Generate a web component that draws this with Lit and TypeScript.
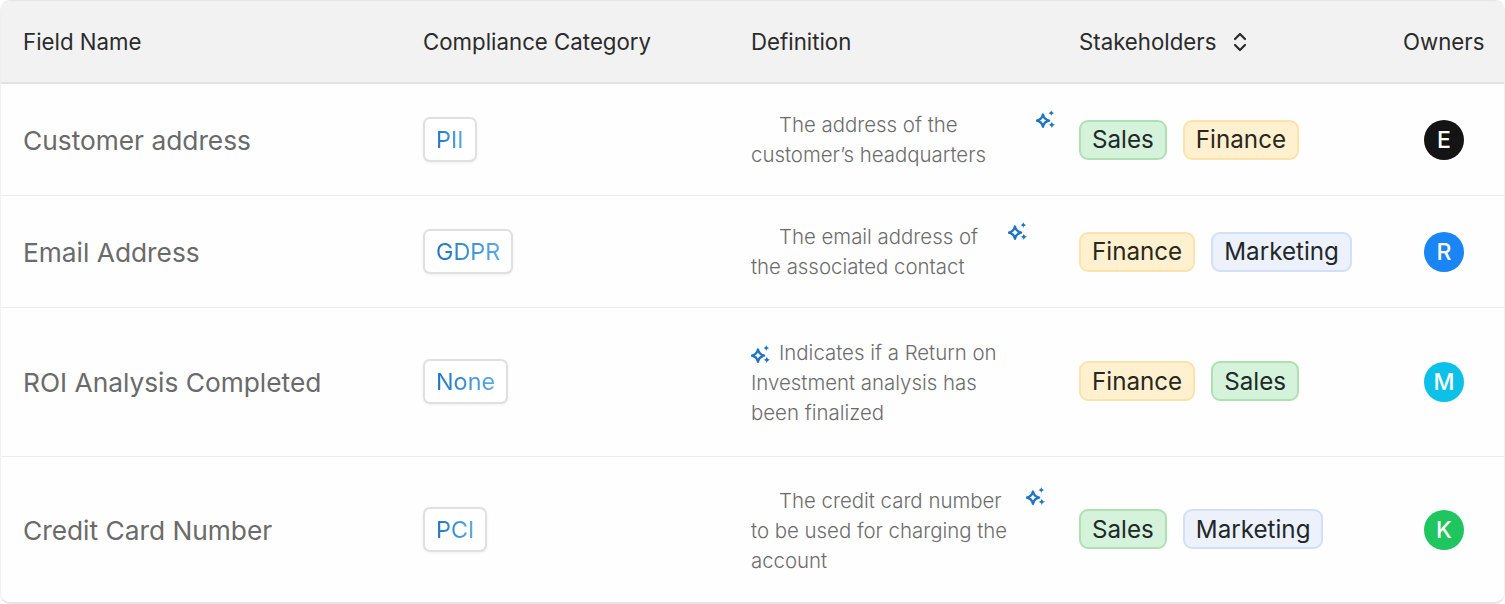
import { LitElement, html, css, svg } from "lit";
import { customElement } from "lit/decorators.js";

const rows = [
  { name: "Customer address", cat: "PII", lines: ["The address of the", "customer’s headquarters"], spark: 285, tags: ["Sales", "Finance"], init: "E", color: "#141414" },
  { name: "Email Address", cat: "GDPR", lines: ["The email address of", "the associated contact"], spark: 257, tags: ["Finance", "Marketing"], init: "R", color: "#1a85f5" },
  { name: "ROI Analysis Completed", cat: "None", lines: ["Indicates if a Return on", "Investment analysis has", "been finalized"], spark: 0, tags: ["Finance", "Sales"], init: "M", color: "#0cc0e8" },
  { name: "Credit Card Number", cat: "PCI", lines: ["The credit card number", "to be used for charging the", "account"], spark: 275, tags: ["Sales", "Marketing"], init: "K", color: "#1fc55e" },
];

const sparkle = svg`<path d="M8 5.2 C8.6 8 10 9.4 12.8 10 C10 10.6 8.6 12 8 14.8 C7.4 12 6 10.6 3.2 10 C6 9.4 7.4 8 8 5.2 Z" fill="none" stroke="#1f74c4" stroke-width="1.9" stroke-linejoin="round"/>
<path d="M14.6 1.6 C14.9 3 15.6 3.7 17 4 C15.6 4.3 14.9 5 14.6 6.4 C14.3 5 13.6 4.3 12.2 4 C13.6 3.7 14.3 3 14.6 1.6 Z" fill="#1f74c4"/>
<path d="M15 10.6 C15.3 12.2 16 12.9 17.8 13.3 C16 13.7 15.3 14.4 15 16 C14.7 14.4 14 13.7 12.2 13.3 C14 12.9 14.7 12.2 15 10.6 Z" fill="#1f74c4"/>`;

@customElement("app-root")
export class AppRoot extends LitElement {
  static styles = css`
    :host { display: block; font-family: Inter, "Liberation Sans", sans-serif; font-optical-sizing: none; background: #fff; }
    .card { width: 1505px; height: 604px; box-sizing: border-box; border: 1px solid #e6e6e6; border-left-color: #f0f0f0; border-right-color: #f0f0f0; border-bottom: 2px solid #e4e4e4; border-radius: 10px; overflow: hidden; background: #fefefe; }
    .row { display: grid; grid-template-columns: 400px 328px 328px 324px 1fr; padding-left: 22px; align-items: center; border-bottom: 1px solid #ececec; box-sizing: border-box; }
    .row:last-child { border-bottom: 0; }
    .head { height: 83px; background: #f2f2f2; border-bottom: 2px solid #e2e2e2; font-size: 22.25px; color: #2b2b2b; }
    .r0, .r1 { height: 112px; }
    .r2 { height: 149px; }
    .r3 { height: 146px; }
    .sort { display: flex; align-items: center; gap: 15px; }
    .sort svg { display: block; width: 18px; height: 22px; }
    .name { font-size: 26.3px; color: #6a6a6a; margin-top: 2px; }
    .r2 .name, .r3 .name { margin-top: 0; }
    .badge { justify-self: start; box-sizing: border-box; padding: 0 11px; height: 45px; display: flex; align-items: center; border: 2px solid #e0e0e0; border-radius: 7px; font-size: 23.4px; background: #fff; box-shadow: 0 1px 3px rgba(0,0,0,.06); background-clip: padding-box; }
    .r2 .badge, .r3 .badge { margin-bottom: 1px; }
    .badge span { background: linear-gradient(90deg, #1f74c4, #5cabe0); -webkit-background-clip: text; background-clip: text; color: transparent; }
    .def { position: relative; font-size: 20.4px; line-height: 30px; color: #6c6c6c; font-weight: 300; }
    .r2 .def, .r3 .def { margin-top: 2px; }
    .line { white-space: nowrap; }
    .line.first { text-indent: 28px; }
    .spark { position: absolute; width: 20px; height: 20px; top: -1px; }
    .r2 .spark { top: 6px; }
    .r3 .spark { top: 0; }
    .tags { display: flex; gap: 16px; }
    .r2 .tags, .r3 .tags { margin-bottom: 2px; }
    .tag { height: 40px; box-sizing: border-box; padding: 0 11px; display: flex; align-items: center; border-radius: 9px; font-size: 24.2px; border: 2px solid; color: #22282a; }
    .Sales { background: #d5f2da; border-color: #aee0b4; }
    .Finance { background: #fff1cf; border-color: #fbe3ab; color: #2a2620; }
    .Marketing { background: #ecf1fc; border-color: #d2dff7; }
    .owner { width: 40px; height: 40px; border-radius: 50%; color: #fff; display: flex; align-items: center; justify-content: center; font-size: 23px; font-weight: 500; margin-left: 21px; }
  `;

  render() {
    return html`<div class="card">
      <div class="row head">
        <div>Field Name</div>
        <div>Compliance Category</div>
        <div>Definition</div>
        <div class="sort">Stakeholders
          <svg viewBox="0 0 18 22" fill="none" stroke="#2b2b2b" stroke-width="2.2" stroke-linecap="round" stroke-linejoin="round"><path d="M4 8 L9 3 L14 8"/><path d="M4 14 L9 19 L14 14"/></svg>
        </div>
        <div>Owners</div>
      </div>
      ${rows.map((r, i) => html`<div class="row r${i}">
        <div class="name">${r.name}</div>
        <div class="badge"><span>${r.cat}</span></div>
        <div class="def">
          <svg class="spark" viewBox="2.5 0.8 15.8 15.8" style="left:${r.spark}px">${sparkle}</svg>
          ${r.lines.map((l, j) => html`<div class="line ${j === 0 ? "first" : ""}">${l}</div>`)}
        </div>
        <div class="tags">${r.tags.map((t) => html`<div class="tag ${t}">${t}</div>`)}</div>
        <div class="owner" style="background:${r.color}">${r.init}</div>
      </div>`)}
    </div>`;
  }
}
